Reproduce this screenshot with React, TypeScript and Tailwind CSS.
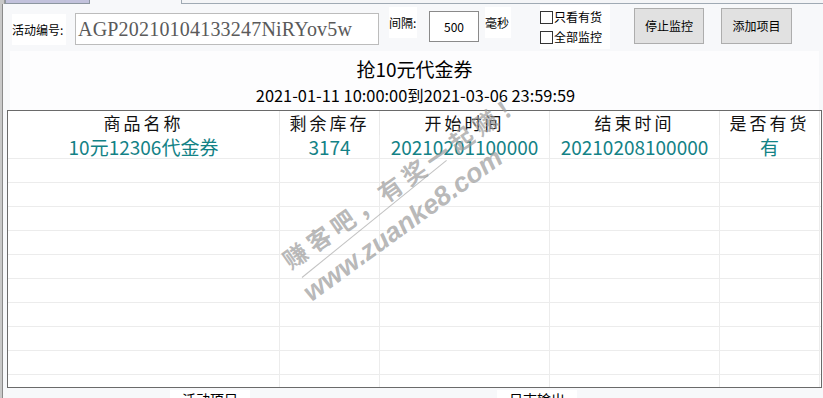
import React from 'react';

const cols = [
  { key: 'name', title: '商品名称', w: 'w-[272px]' },
  { key: 'stock', title: '剩余库存', w: 'w-[100px]' },
  { key: 'start', title: '开始时间', w: 'w-[170px]' },
  { key: 'end', title: '结束时间', w: 'w-[170px]' },
  { key: 'has', title: '是否有货', w: 'w-[100px]' },
];

const row = ['10元12306代金券', '3174', '20210201100000', '20210208100000', '有'];

function Checkbox({ label }: { label: string }) {
  return (
    <div className="flex items-center h-[20px]">
      <span className="w-[13px] h-[13px] border border-[#333] bg-white" />
      <span className="ml-[1px] text-[12px] leading-none whitespace-nowrap">{label}</span>
    </div>
  );
}

export default function App() {
  return (
    <div
      className="w-[823px] h-[398px] overflow-hidden relative bg-[#f7f8fa] text-black"
      style={{ fontFamily: '"Noto Sans CJK SC", "Noto Sans", sans-serif' }}
    >
      {/* 顶部选项卡边 */}
      <div className="flex h-[4px]">
        <div className="w-[5px] h-full bg-[#c8c8c8] border-r border-[#999]" />
        <div className="w-[85px] h-full bg-[#c2c2dc] border-x border-b border-[#8c96a0]" />
        <div className="w-[91px]" />
        <div className="flex-1 h-full bg-[#f4f5f7] border-l border-b border-[#a0aab4]" />
      </div>

      <div className="flex h-[394px]">
        {/* 左侧边 */}
        <div className="w-[3px] h-full bg-[#c8c8c8] border-r border-[#8a8a8a]" />

        <div className="flex-1 flex flex-col">
          {/* 工具栏 */}
          <div className="flex items-start h-[47px]">
            <div className="ml-[9px] mt-[10px] w-[54px] h-[31px] bg-white flex items-center text-[12px] whitespace-nowrap">
              活动编号:
            </div>
            <div className="ml-[9px] mt-[9px] w-[304px] h-[32px] border border-[#bcbcbc] bg-white flex items-center pl-[2px]">
              <span
                className="text-[20px] text-[#5a5a5a] leading-none whitespace-nowrap tracking-[0.2px]"
                style={{ fontFamily: '"Liberation Serif", serif' }}
              >
                AGP20210104133247NiRYov5w
              </span>
            </div>
            <div className="ml-[10px] mt-[3px] w-[28px] h-[31px] bg-white flex items-center text-[12px] whitespace-nowrap">
              间隔:
            </div>
            <div className="ml-[12px] mt-[7px] w-[50px] h-[31px] border border-[#8a8a8a] bg-white flex items-center justify-center text-[12px]">
              500
            </div>
            <div className="ml-[6px] mt-[3px] w-[26px] h-[31px] bg-white flex items-center text-[12px] whitespace-nowrap">
              毫秒
            </div>
            <div className="ml-[29px] mt-[1px] w-[70px] h-[44px] bg-white flex flex-col justify-center">
              <Checkbox label="只看有货" />
              <Checkbox label="全部监控" />
            </div>
            <button className="ml-[24px] mt-[4px] w-[70px] h-[36px] bg-[#e1e1e1] border border-[#adadad] text-[12px]">
              停止监控
            </button>
            <button className="ml-[17px] mt-[4px] w-[71px] h-[36px] bg-[#e1e1e1] border border-[#adadad] text-[12px]">
              添加项目
            </button>
          </div>

          {/* 标题区 */}
          <div className="ml-[7px] mr-[4px] h-[59px] bg-[#fdfdfe] flex flex-col items-center">
            <div className="mt-[6px] text-[19px] leading-[24px]">抢10元代金券</div>
            <div className="mt-[4px] text-[16.4px] leading-[20px] ml-[2px] whitespace-nowrap">
              2021-01-11 10:00:00到2021-03-06 23:59:59
            </div>
          </div>

          {/* 表格 */}
          <div className="ml-[4px] w-[815px] h-[279px] border border-[#6a6a6a] bg-white overflow-hidden">
            <div className="flex h-[24px]">
              {cols.map((c) => (
                <div
                  key={c.key}
                  className={`${c.w} h-full border-r border-[#e8e8e8] flex items-center justify-center text-[17px] tracking-[3px] text-[#111]`}
                >
                  {c.title}
                </div>
              ))}
            </div>
            <div className="flex h-[24px] border-b border-[#ececec]">
              {cols.map((c, i) => (
                <div
                  key={c.key}
                  className={`${c.w} h-full border-r border-[#ececec] flex items-center justify-center text-[19px] text-[#138286] leading-none`}
                >
                  {row[i]}
                </div>
              ))}
            </div>
            {Array.from({ length: 10 }).map((_, r) => (
              <div key={r} className="flex h-[24px] border-b border-[#ececec]">
                {cols.map((c) => (
                  <div key={c.key} className={`${c.w} h-full border-r border-[#ececec]`} />
                ))}
              </div>
            ))}
          </div>

          {/* 底部分组标题 */}
          <div className="flex h-[10px] overflow-hidden">
            <div className="ml-[167px] mt-[2px] w-[80px] bg-white text-[14px] leading-[18px] pl-[12px] whitespace-nowrap">活动项目</div>
            <div className="ml-[247px] mt-[2px] w-[80px] bg-white text-[14px] leading-[18px] pl-[12px] whitespace-nowrap">日志输出</div>
          </div>
        </div>
      </div>

      {/* 水印 */}
      <div className="absolute left-[285px] top-[247px] origin-left -rotate-[35deg] text-[24px] leading-[30px] font-bold text-[#9a9a9a]/70 tracking-[5px] whitespace-nowrap">
        赚客吧，有奖一起赚！
      </div>
      <div className="absolute left-[302px] top-[277px] w-[186px] h-[1px] bg-[#9a9a9a]/60 origin-left -rotate-[39deg]" />
      <div
        className="absolute left-[306px] top-[280px] origin-left -rotate-[36deg] text-[27px] leading-[30px] font-bold italic text-[#9a9a9a]/70 whitespace-nowrap"
        style={{ fontFamily: '"Liberation Sans", sans-serif' }}
      >
        www.zuanke8.com
      </div>
    </div>
  );
}
